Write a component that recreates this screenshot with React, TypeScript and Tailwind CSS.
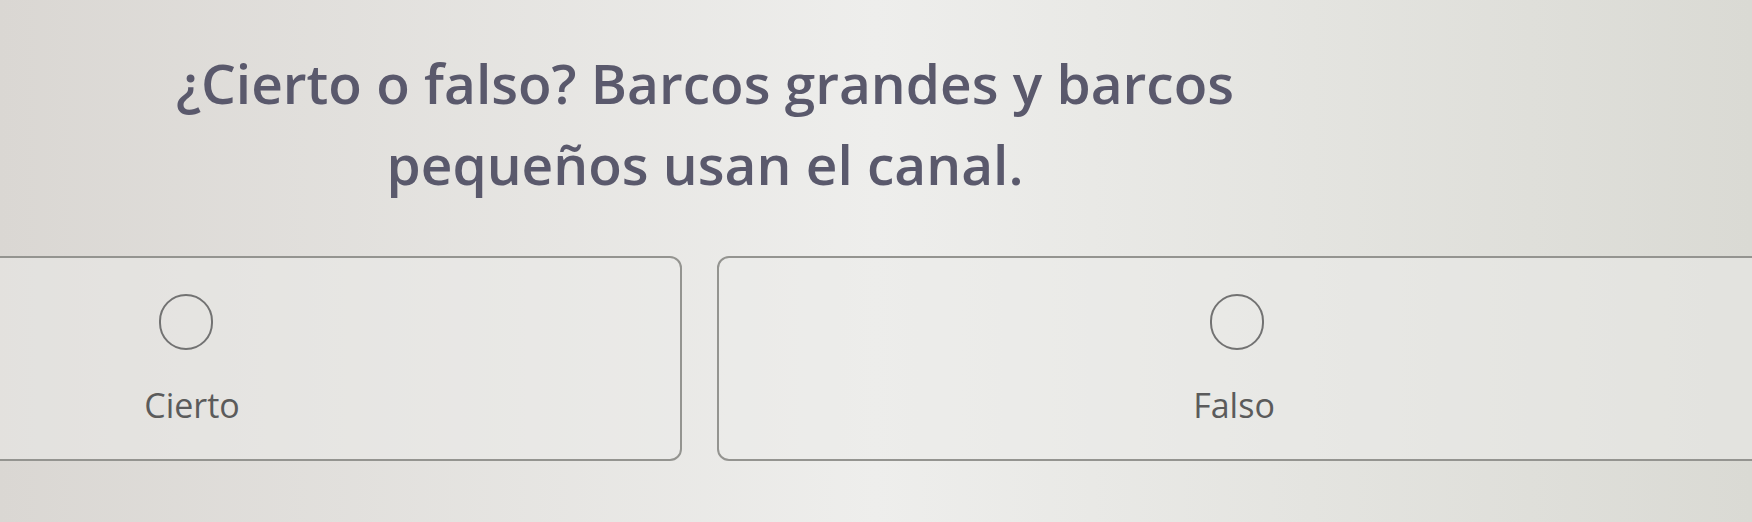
import React from 'react';

interface OptionProps {
  label: string;
  className: string;
  contentClass: string;
}

const Option: React.FC<OptionProps> = ({ label, className, contentClass }) => {
  return (
    <div className={`h-[205px] shrink-0 rounded-[12px] border-2 border-[#949490] bg-[#ececea]/50 ${className}`}>
      <div className={`flex w-[120px] flex-col items-center pt-[36px] ${contentClass}`}>
        <div className="h-[56px] w-[54px] rounded-full border-[2.5px] border-[#727272]" />
        <span className="mt-[30px] text-[34px] leading-[51px] text-[#5b5b5b]">{label}</span>
      </div>
    </div>
  );
};

export default function App() {
  return (
    <div
      className="h-[522px] w-[1752px] overflow-hidden bg-linear-to-r from-[#dad7d3] via-[#eeeeec] to-[#dadad4]"
      style={{ fontFamily: '"Open Sans", "Noto Sans", sans-serif' }}
    >
      <div className="w-[1410px] pt-[42px] text-center text-[55px] font-semibold leading-[81px] text-[#5a596c]">
        <p>¿Cierto o falso? Barcos grandes y barcos</p>
        <p>pequeños usan el canal.</p>
      </div>
      <div className="-ml-[12px] mt-[52px] flex gap-[35px]">
        <Option label="Cierto" className="w-[694px]" contentClass="ml-[136px] [&>span]:ml-[12px]" />
        <Option label="Falso" className="w-[1100px]" contentClass="ml-[458px] [&>span]:-ml-[6px]" />
      </div>
    </div>
  );
}
